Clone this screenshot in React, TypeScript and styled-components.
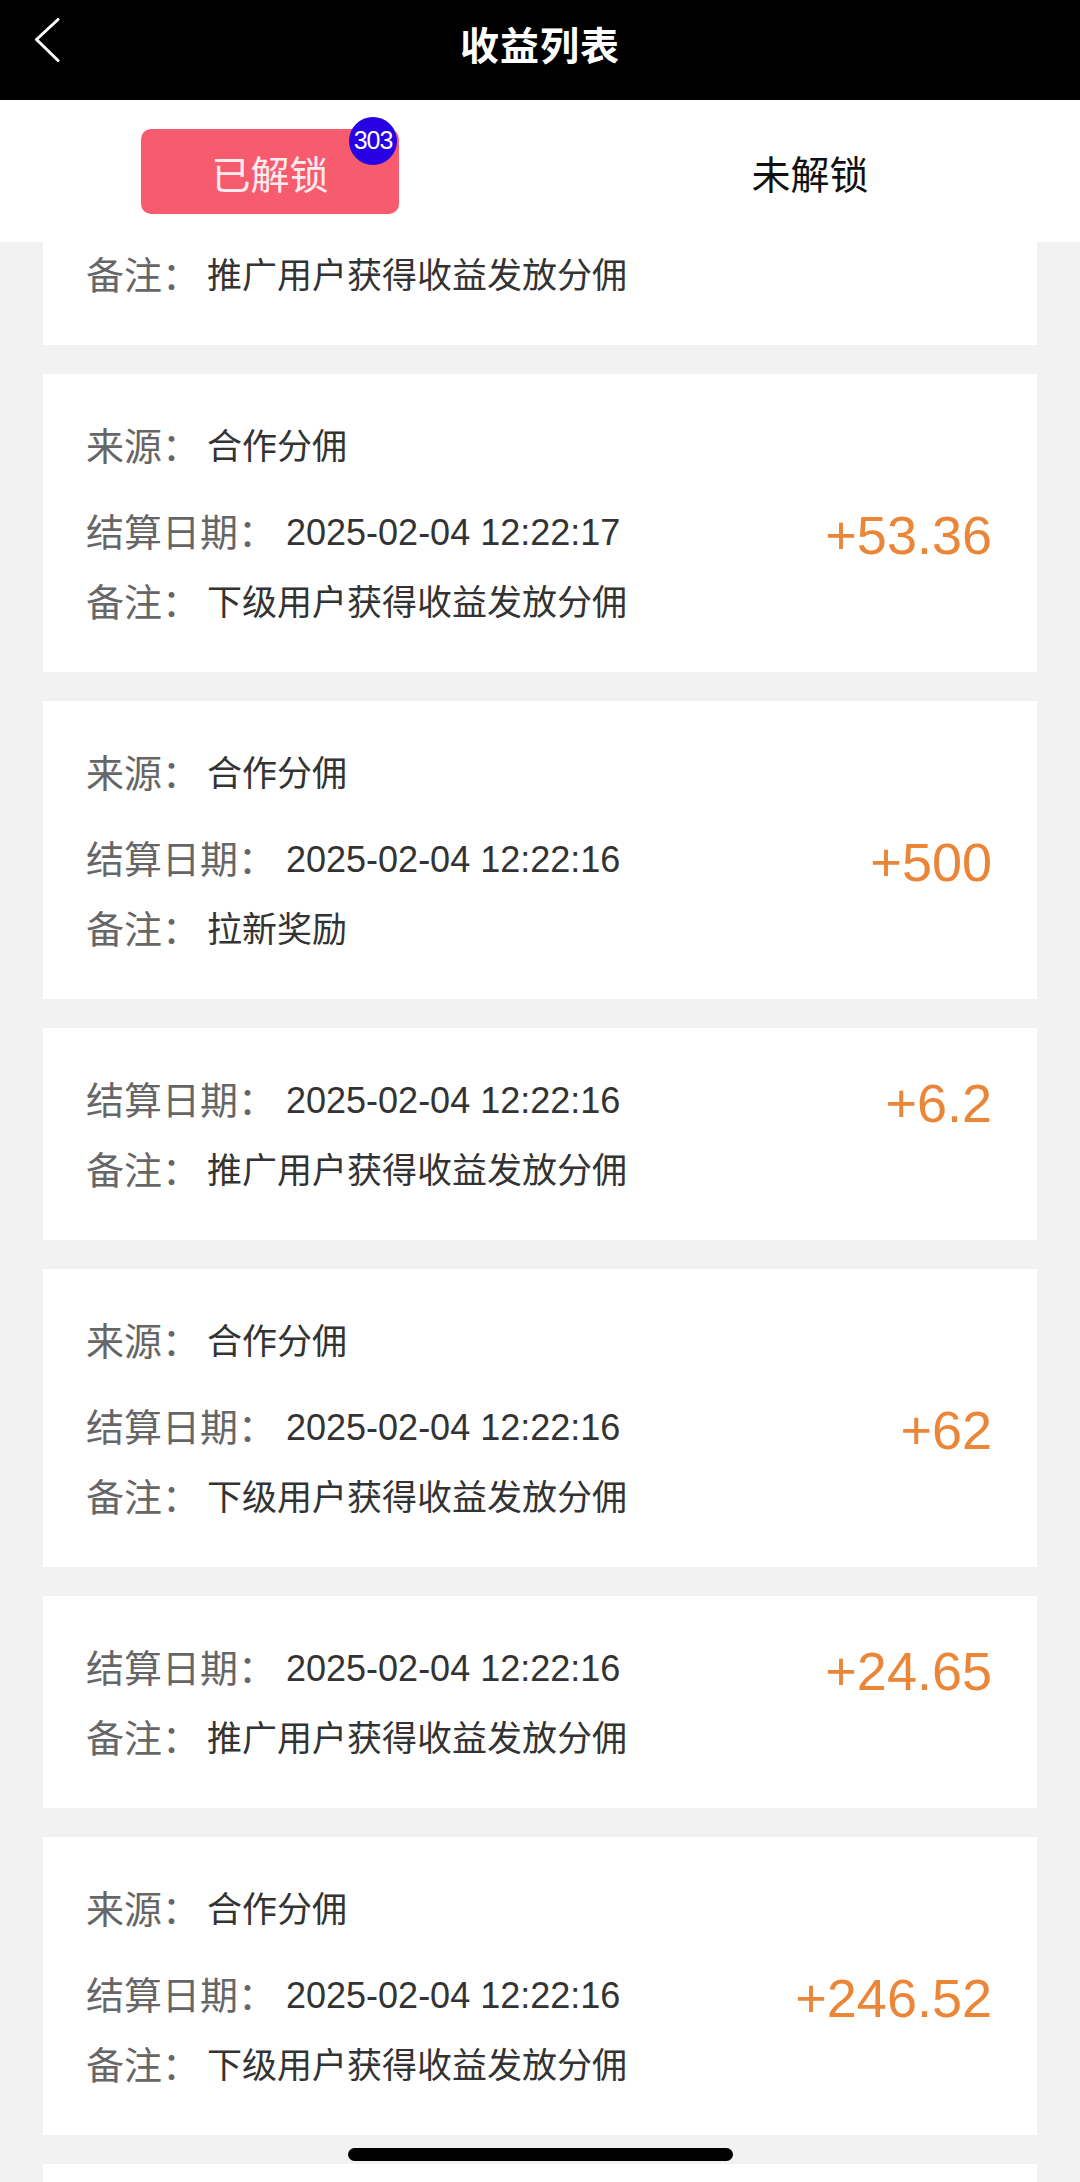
import styled, { createGlobalStyle } from 'styled-components';

const GlobalStyle = createGlobalStyle`
  html, body {
    margin: 0;
    padding: 0;
    background: #f2f2f2;
  }
  body {
    font-family: "Liberation Sans", "Noto Sans CJK SC", sans-serif;
  }
`;

type Income = {
  id: number;
  source?: string;
  date: string;
  remark: string;
  amount: string;
};

const incomes: Income[] = [
  { id: 1, date: '2025-02-04 12:22:17', remark: '推广用户获得收益发放分佣', amount: '+12.5' },
  { id: 2, source: '合作分佣', date: '2025-02-04 12:22:17', remark: '下级用户获得收益发放分佣', amount: '+53.36' },
  { id: 3, source: '合作分佣', date: '2025-02-04 12:22:16', remark: '拉新奖励', amount: '+500' },
  { id: 4, date: '2025-02-04 12:22:16', remark: '推广用户获得收益发放分佣', amount: '+6.2' },
  { id: 5, source: '合作分佣', date: '2025-02-04 12:22:16', remark: '下级用户获得收益发放分佣', amount: '+62' },
  { id: 6, date: '2025-02-04 12:22:16', remark: '推广用户获得收益发放分佣', amount: '+24.65' },
  { id: 7, source: '合作分佣', date: '2025-02-04 12:22:16', remark: '下级用户获得收益发放分佣', amount: '+246.52' },
  { id: 8, date: '2025-02-04 12:22:16', remark: '推广用户获得收益发放分佣', amount: '+3.1' },
];

const Page = styled.div`
  position: relative;
  width: 1080px;
  height: 2182px;
  display: flex;
  flex-direction: column;
  overflow: hidden;
  background: #f2f2f2;
`;

const NavBar = styled.header`
  flex: none;
  height: 100px;
  display: grid;
  grid-template-columns: 140px 1fr 140px;
  background: #000;
`;

const BackButton = styled.button`
  align-self: start;
  justify-self: start;
  margin: 18px 0 0 34px;
  padding: 0;
  border: 0;
  background: none;
  display: flex;
`;

const Title = styled.h1`
  margin: 0;
  padding-bottom: 14px;
  align-self: center;
  text-align: center;
  color: #fff;
  font-size: 39px;
  font-weight: 700;
  letter-spacing: 1px;
`;

const TabBar = styled.nav`
  flex: none;
  height: 142px;
  display: grid;
  grid-template-columns: 1fr 1fr;
  align-items: center;
  justify-items: center;
  background: #fff;
`;

const Tab = styled.div<{ $active?: boolean }>`
  position: relative;
  width: 258px;
  height: 85px;
  display: flex;
  align-items: center;
  justify-content: center;
  padding-top: 2px;
  box-sizing: border-box;
  border-radius: 10px;
  font-size: 39px;
  color: ${(p) => (p.$active ? '#fdecee' : '#111')};
  background: ${(p) => (p.$active ? '#f75b6e' : 'transparent')};
`;

const Badge = styled.span`
  position: absolute;
  top: -12px;
  right: 2px;
  width: 48px;
  height: 48px;
  border-radius: 50%;
  display: flex;
  align-items: center;
  justify-content: center;
  background: #2700e4;
  color: #fff;
  font-size: 25px;
  letter-spacing: -1px;
`;

const Feed = styled.main`
  flex: 1;
  overflow: hidden;
`;

const List = styled.div`
  margin-top: -109px;
  padding: 0 43px;
  display: flex;
  flex-direction: column;
  gap: 29px;
`;

const Card = styled.section`
  background: #fff;
  padding: 38px 45px 34px 43px;
`;

const Row = styled.div<{ $spaced?: boolean }>`
  height: 70px;
  display: flex;
  align-items: center;
  margin-bottom: ${(p) => (p.$spaced ? '16px' : '0')};
`;

const Label = styled.span`
  color: #666;
  font-size: 38px;
  margin: 0 7px 8px 0;
`;

const Value = styled.span`
  color: #333;
  font-size: 35px;
  margin-bottom: 8px;
`;

const DateValue = styled.span`
  color: #333;
  font-size: 36px;
  margin-left: 3px;
`;

const Amount = styled.span`
  margin-left: auto;
  color: #eb8538;
  font-size: 54px;
  margin-top: 4px;
`;

const HomeIndicator = styled.div`
  position: absolute;
  left: 348px;
  bottom: 21px;
  width: 385px;
  height: 13px;
  border-radius: 7px;
  background: #000;
`;

const IncomeCard = ({ item }: { item: Income }) => (
  <Card>
    {item.source && (
      <Row $spaced>
        <Label>来源：</Label>
        <Value>{item.source}</Value>
      </Row>
    )}
    <Row>
      <Label>结算日期：</Label>
      <DateValue>{item.date}</DateValue>
      <Amount>{item.amount}</Amount>
    </Row>
    <Row>
      <Label>备注：</Label>
      <Value>{item.remark}</Value>
    </Row>
  </Card>
);

export default function App() {
  return (
    <Page>
      <GlobalStyle />
      <NavBar>
        <BackButton aria-label="返回">
          <svg width="26" height="44" viewBox="0 0 26 44" fill="none">
            <polyline
              points="24,1.5 2.5,21.5 24,42.5"
              stroke="#fff"
              strokeWidth="3"
              strokeLinecap="round"
              strokeLinejoin="round"
            />
          </svg>
        </BackButton>
        <Title>收益列表</Title>
        <span />
      </NavBar>
      <TabBar>
        <Tab $active>
          已解锁
          <Badge>303</Badge>
        </Tab>
        <Tab>未解锁</Tab>
      </TabBar>
      <Feed>
        <List>
          {incomes.map((item) => (
            <IncomeCard key={item.id} item={item} />
          ))}
        </List>
      </Feed>
      <HomeIndicator />
    </Page>
  );
}
